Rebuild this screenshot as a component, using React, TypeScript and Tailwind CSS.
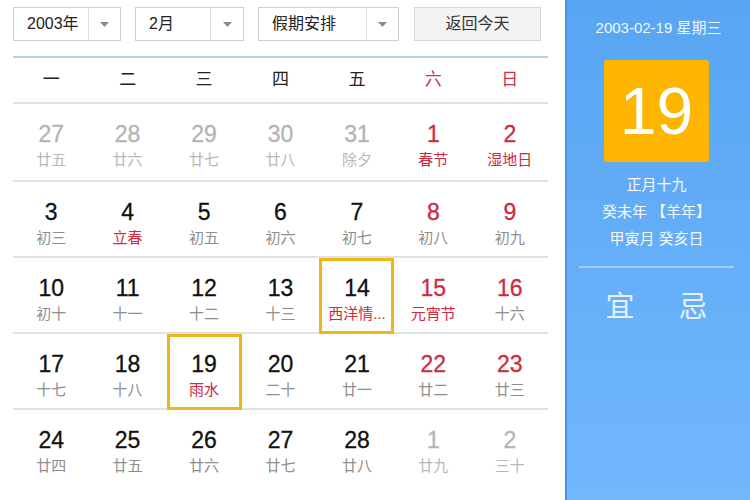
import React from 'react';

type Cell = { d: number; l: string; muted?: boolean; red?: boolean; lred?: boolean; box?: boolean };

const weeks: Cell[][] = [
  [
    { d: 27, l: '廿五', muted: true },
    { d: 28, l: '廿六', muted: true },
    { d: 29, l: '廿七', muted: true },
    { d: 30, l: '廿八', muted: true },
    { d: 31, l: '除夕', muted: true },
    { d: 1, l: '春节', red: true, lred: true },
    { d: 2, l: '湿地日', red: true, lred: true },
  ],
  [
    { d: 3, l: '初三' },
    { d: 4, l: '立春', lred: true },
    { d: 5, l: '初五' },
    { d: 6, l: '初六' },
    { d: 7, l: '初七' },
    { d: 8, l: '初八', red: true },
    { d: 9, l: '初九', red: true },
  ],
  [
    { d: 10, l: '初十' },
    { d: 11, l: '十一' },
    { d: 12, l: '十二' },
    { d: 13, l: '十三' },
    { d: 14, l: '西洋情...', lred: true, box: true },
    { d: 15, l: '元宵节', red: true, lred: true },
    { d: 16, l: '十六', red: true },
  ],
  [
    { d: 17, l: '十七' },
    { d: 18, l: '十八' },
    { d: 19, l: '雨水', lred: true, box: true },
    { d: 20, l: '二十' },
    { d: 21, l: '廿一' },
    { d: 22, l: '廿二', red: true },
    { d: 23, l: '廿三', red: true },
  ],
  [
    { d: 24, l: '廿四' },
    { d: 25, l: '廿五' },
    { d: 26, l: '廿六' },
    { d: 27, l: '廿七' },
    { d: 28, l: '廿八' },
    { d: 1, l: '廿九', muted: true },
    { d: 2, l: '三十', muted: true },
  ],
];

const weekdays = ['一', '二', '三', '四', '五', '六', '日'];

function Caret() {
  return (
    <svg width="9" height="5" viewBox="0 0 9 5">
      <path d="M0 0h9L4.5 5z" fill="#8a8a8a" />
    </svg>
  );
}

function Select({ label, w, arrowW }: { label: string; w: string; arrowW: string }) {
  return (
    <div className={`flex h-[34px] ${w} border border-[#cfcfcf] bg-white`}>
      <div className="flex flex-1 items-center pl-[13px] text-[16px] text-[#222]">{label}</div>
      <div className={`flex ${arrowW} items-center justify-center border-l border-[#dcdcdc]`}>
        <Caret />
      </div>
    </div>
  );
}

export default function App() {
  return (
    <div
      className="flex h-[500px] w-[750px] overflow-hidden bg-white"
      style={{ fontFamily: '"Liberation Sans", "Noto Sans CJK SC", sans-serif' }}
    >
      <div className="w-[565px] pl-[13px] pr-[17px] pt-[7px]">
        <div className="flex items-center">
          <Select label="2003年" w="w-[108px]" arrowW="w-[32px]" />
          <div className="ml-[14px]">
            <Select label="2月" w="w-[109px]" arrowW="w-[33px]" />
          </div>
          <div className="ml-[14px]">
            <Select label="假期安排" w="w-[141px]" arrowW="w-[32px]" />
          </div>
          <div className="ml-[15px] flex h-[34px] w-[127px] items-center justify-center border border-[#d6d6d6] bg-[#f3f3f3] text-[16px] text-[#333]">
            返回今天
          </div>
        </div>

        <div className="mt-[15px] h-[2px] bg-[#a9d3ef]" />

        <div className="grid h-[46px] grid-cols-7 items-center border-b-2 border-[#e2e2e2] text-[17px]">
          {weekdays.map((w, i) => (
            <div key={w} className={`text-center ${i >= 5 ? 'text-[#c8334a]' : 'text-[#222]'}`}>
              {w}
            </div>
          ))}
        </div>

        {weeks.map((row, ri) => (
          <div
            key={ri}
            className={`grid grid-cols-7 ${ri === 0 ? 'h-[78px]' : 'h-[76px]'} ${
              ri < 4 ? 'border-b-2 border-[#e2e2e2]' : ''
            }`}
          >
            {row.map((c, ci) => (
              <div key={ci} className="flex items-stretch justify-center">
                <div
                  className={`flex w-[75px] flex-col items-center ${
                    c.box ? 'mb-[-2px] border-[3px] border-[#f0b719] pt-[14px]' : 'pt-[17px]'
                  }`}
                >
                  <div
                    className={`text-[23px] leading-[26px] [-webkit-text-stroke:0.3px_currentColor] ${
                      c.muted ? 'text-[#b4b4b4]' : c.red ? 'text-[#cc2b40]' : 'text-[#111]'
                    }`}
                  >
                    {c.d}
                  </div>
                  <div
                    className={`mt-[4px] text-[15px] leading-[18px] ${
                      c.lred ? 'text-[#cc2b40]' : c.muted ? 'text-[#b8b8b8]' : 'text-[#8e8e8e]'
                    }`}
                  >
                    {c.l}
                  </div>
                </div>
              </div>
            ))}
          </div>
        ))}
      </div>

      <div className="flex w-[185px] flex-col items-center border-l-2 border-[#4a93e6] bg-gradient-to-b from-[#58a5f3] to-[#71b7fc]">
        <div className="mt-[17px] text-[15px] text-[#f0f7ff]">2003-02-19 星期三</div>
        <div className="mr-[4px] mt-[20px] flex h-[102px] w-[105px] items-center justify-center rounded-[3px] bg-[#fdb500] text-[66px] leading-none text-white">
          19
        </div>
        <div className="mr-[4px] mt-[9px] text-center text-[15px] leading-[27px] text-[#f3f9ff]">
          <div>正月十九</div>
          <div>癸未年 【羊年】</div>
          <div>甲寅月 癸亥日</div>
        </div>
        <div className="mr-[4px] mt-[14px] h-[2px] w-[155px] bg-[#a6cdf6]" />
        <div className="mr-[4px] mt-[18px] flex w-[102px] justify-between text-[29px] text-[#e6f1fd]">
          <span>宜</span>
          <span>忌</span>
        </div>
      </div>
    </div>
  );
}
